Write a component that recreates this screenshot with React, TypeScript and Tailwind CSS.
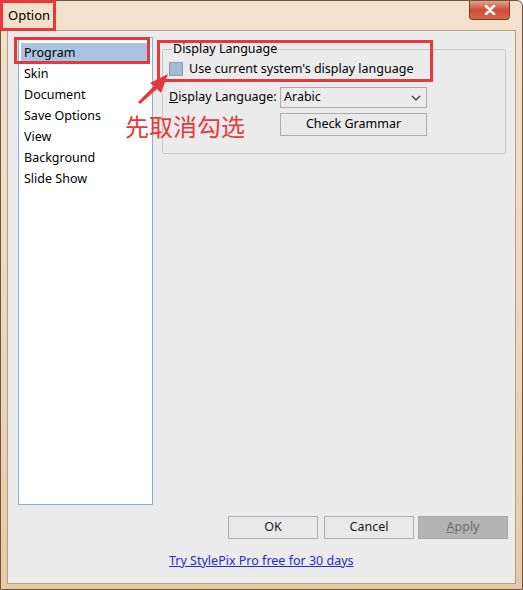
import React from 'react';

const listItems = ['Program', 'Skin', 'Document', 'Save Options', 'View', 'Background', 'Slide Show'];

const font = { fontFamily: '"Noto Sans", "Open Sans", sans-serif' };

const Btn: React.FC<{ children: React.ReactNode; disabled?: boolean }> = ({ children, disabled }) => (
  <div
    className={`w-[90px] h-[23px] flex items-center justify-center border text-[12.5px] ${
      disabled ? 'bg-[#b4b4b4] border-[#a8a8a8] text-[#6d6d6d]' : 'bg-[#e9e9e9] border-[#acacac] text-[#1a1a1a]'
    }`}
  >
    {children}
  </div>
);

export default function App() {
  return (
    <div className="w-[523px] h-[590px] bg-white" style={font}>
      <div className="relative w-[523px] h-[590px] flex flex-col rounded-t-[6px] border border-[#6b5544] bg-gradient-to-b from-[#f4e1cc] via-[#efd8bf] to-[#e8c9a6]">
        {/* title bar */}
        <div className="h-[29px] flex items-start justify-between">
          <span className="pl-[7px] pt-[5px] text-[13px] text-black leading-[18px]">Option</span>
          <div className="mr-[12px] w-[41px] h-[19px] rounded-b-[4px] border border-[#7a3a2a] border-t-0 bg-gradient-to-b from-[#e8a08a] via-[#cf4b35] to-[#d9664c] flex items-center justify-center">
            <svg width="12" height="10" viewBox="0 0 12 10">
              <path d="M2 1 L10 9 M10 1 L2 9" stroke="#fff" strokeWidth="2.6" strokeLinecap="round" />
            </svg>
          </div>
        </div>

        {/* client area */}
        <div className="mx-[6px] mb-[5px] flex-1 flex flex-col bg-[#ebebeb] border border-[#b3a08b]">
          <div className="flex pt-[6px] pl-[10px] pr-[9px] gap-[9px]">
            <div className="w-[135px] h-[468px] bg-white border border-[#84afd6] px-[2px] pt-[5px] text-[12.5px] text-black">
              {listItems.map((item, i) => (
                <div
                  key={item}
                  className={`h-[21px] pl-[3px] flex items-center leading-none ${i === 0 ? 'bg-[#a9c3e0]' : ''}`}
                >
                  {item}
                </div>
              ))}
            </div>

            <div className="flex-1 pt-[12px]">
              <div className="relative h-[105px] border border-[#c9c9c9] rounded-[2px] px-[6px] pt-[8px]">
                <span className="absolute -top-[9px] left-[9px] px-[1px] bg-[#ebebeb] text-[12.5px] leading-[16px] text-black">
                  Display Language
                </span>
                <div className="flex items-center gap-[6px] h-[22px] text-[12.5px] text-black">
                  <div className="w-[14px] h-[14px] border border-[#8b9bb0] bg-[#a5bad3]" />
                  <span className="whitespace-nowrap">Use current system's display language</span>
                </div>
                <div className="mt-[7px] flex items-center text-[12.5px] text-black">
                  <span className="w-[111px] whitespace-nowrap">
                    <span className="underline">D</span>isplay Language:
                  </span>
                  <div className="w-[147px] h-[21px] border border-[#acacac] bg-[#ebebeb] flex items-center justify-between pl-[3px] pr-[5px]">
                    <span>Arabic</span>
                    <svg width="10" height="6" viewBox="0 0 10 6">
                      <path d="M1 1 L5 5 L9 1" stroke="#333" strokeWidth="1.2" fill="none" />
                    </svg>
                  </div>
                </div>
                <div className="mt-[5px] ml-[111px] w-[147px] h-[23px] border border-[#acacac] bg-[#e9e9e9] flex items-center justify-center text-[12.5px] text-black">
                  Check Grammar
                </div>
              </div>
            </div>
          </div>

          <div className="mt-[11px] pr-[7px] flex justify-end">
            <Btn>OK</Btn>
            <div className="w-[6px]" />
            <Btn>Cancel</Btn>
            <div className="w-[4px]" />
            <Btn disabled>
              <span>
                <span className="underline">A</span>pply
              </span>
            </Btn>
          </div>

          <div className="mt-[13px] pl-[161px] text-[12.5px] text-[#2a2ac8] underline">Try StylePix Pro free for 30 days</div>
        </div>

        {/* annotations */}
        <div className="absolute left-[-1px] top-[-1px] w-[56px] h-[31px] border-[3px] border-[#e6393c]" />
        <div className="absolute left-[13px] top-[36px] w-[136px] h-[27px] border-[3px] border-[#e6393c]" />
        <div className="absolute left-[156px] top-[39px] w-[276px] h-[42px] border-[3px] border-[#e6393c]" />
        <svg className="absolute left-[129px] top-[54px]" width="50" height="55" viewBox="0 0 50 55">
          <polygon points="38,19 31,38 27,34 10,49 8,47 24,31 20,28" fill="#e6393c" />
        </svg>
        <span
          className="absolute left-[124px] top-[111px] text-[24px] leading-[28px] text-[#e6393c]"
          style={{ fontFamily: '"Noto Sans CJK SC", sans-serif' }}
        >
          先取消勾选
        </span>
      </div>
    </div>
  );
}
